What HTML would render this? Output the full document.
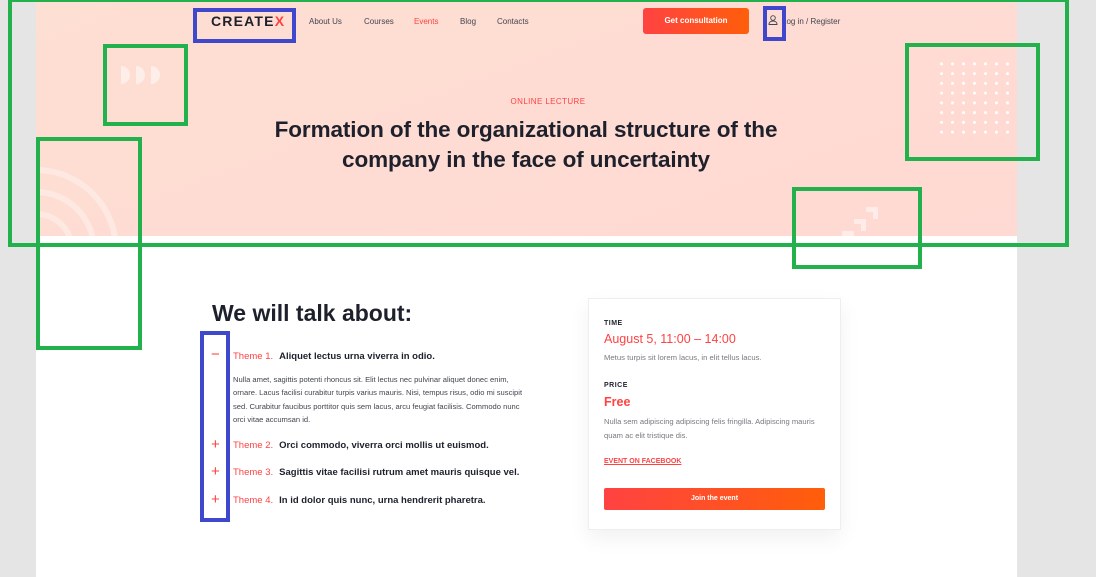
<!DOCTYPE html>
<html><head><meta charset="utf-8"><style>
*{margin:0;padding:0;box-sizing:border-box}
body{width:1096px;height:577px;background:#e5e5e5;position:relative;overflow:hidden;font-family:"Liberation Sans",sans-serif;color:#1e212c}
.page{position:absolute;left:36px;top:0;width:981px;height:577px;background:#fff}
.hero{position:absolute;left:36px;top:0;width:981px;height:236px;background:linear-gradient(160deg,#fedfd3,#ffd9d3)}
.a{position:absolute}
.g{position:absolute;border:4px solid #22b14c}
.b{position:absolute;border:4px solid #3f48cc}
.nav{font-size:8px;color:#424551;top:17px}
.dots{position:absolute;left:936px;top:59px;width:77px;height:78px;background-image:radial-gradient(circle,#fff 1.3px,transparent 1.7px);background-size:11px 9.75px}
.th{position:absolute;left:233px;font-size:9.5px;color:#ff4242}
.th b{color:#1e212c;margin-left:6px}
.pl{position:absolute;left:211px;color:#ff4242;font-size:15px;font-weight:300}
</style></head><body>
<div class="page"></div>
<div class="hero"></div>
<div class="a" style="left:211px;top:13px;font-size:14px;font-weight:bold;letter-spacing:1.2px">CREATE<span style="color:#ff4242">X</span></div>
<div class="a nav" style="left:309px">About Us</div>
<div class="a nav" style="left:364px">Courses</div>
<div class="a nav" style="left:414px;color:#ff4242">Events</div>
<div class="a nav" style="left:460px">Blog</div>
<div class="a nav" style="left:497px">Contacts</div>
<div class="a" style="left:643px;top:8px;width:106px;height:26px;background:linear-gradient(90deg,#ff4242,#ff5e0a);border-radius:3px;color:#fff;font-size:8px;font-weight:bold;text-align:center;line-height:26px">Get consultation</div>
<svg class="a" style="left:767px;top:14px" width="12" height="12" viewBox="0 0 12 12" fill="none" stroke="#424551" stroke-width="0.9"><circle cx="6" cy="4" r="2.3"/><path d="M2 10.5c0-2.3 1.8-3.5 4-3.5s4 1.2 4 3.5z"/></svg>
<div class="a nav" style="left:782px">Log in / Register</div>
<div class="a" style="left:0;width:1096px;top:97px;text-align:center;font-size:8px;color:#ff4242;letter-spacing:.4px">ONLINE LECTURE</div>
<div class="a" style="left:0;width:1052px;top:115px;text-align:center;font-size:22.5px;font-weight:bold;line-height:30px;letter-spacing:-.1px">Formation of the organizational structure of the<br>company in the face of uncertainty</div>
<svg class="a" style="left:121px;top:65px" width="40" height="20" fill="#fff" opacity=".5"><path d="M0 1a9 9 0 0 1 0 18z M15 1a9 9 0 0 1 0 18z M30 1a9 9 0 0 1 0 18z"/></svg>
<svg class="a" style="left:36px;top:160px" width="90" height="76" fill="none" stroke="#fff" opacity=".35" stroke-width="6"><circle cx="0" cy="90" r="80"/><circle cx="0" cy="90" r="58"/><circle cx="0" cy="90" r="36"/></svg>
<div class="dots"></div>
<svg class="a" style="left:822px;top:206px" width="60" height="30" fill="#fff" opacity=".5"><path d="M44 1h12v12h-5v-7h-7z M32 13h12v12h-5v-7h-7z M20 25h12v5h-12z"/></svg>
<div class="a" style="left:212px;top:300px;font-size:23px;font-weight:bold">We will talk about:</div>
<div class="pl" style="top:346px">−</div>
<div class="th" style="top:351px">Theme 1.<b>Aliquet lectus urna viverra in odio.</b></div>
<div class="a" style="left:233px;top:373px;width:296px;font-size:7.6px;line-height:13.3px;color:#424551">Nulla amet, sagittis potenti rhoncus sit. Elit lectus nec pulvinar aliquet donec enim, ornare. Lacus facilisi curabitur turpis varius mauris. Nisi, tempus risus, odio mi suscipit sed. Curabitur faucibus porttitor quis sem lacus, arcu feugiat facilisis. Commodo nunc orci vitae accumsan id.</div>
<div class="pl" style="top:436px">+</div>
<div class="th" style="top:440px">Theme 2.<b>Orci commodo, viverra orci mollis ut euismod.</b></div>
<div class="pl" style="top:463px">+</div>
<div class="th" style="top:467px">Theme 3.<b>Sagittis vitae facilisi rutrum amet mauris quisque vel.</b></div>
<div class="pl" style="top:491px">+</div>
<div class="th" style="top:495px">Theme 4.<b>In id dolor quis nunc, urna hendrerit pharetra.</b></div>
<div class="a" style="left:588px;top:298px;width:253px;height:232px;background:#fff;border:1px solid #eee;box-shadow:0 8px 20px rgba(0,0,0,.06)"></div>
<div class="a" style="left:604px;top:320px;font-size:7px;font-weight:bold;letter-spacing:.5px">TIME</div>
<div class="a" style="left:604px;top:332px;font-size:12.5px;color:#ff4242">August 5, 11:00 – 14:00</div>
<div class="a" style="left:604px;top:353px;font-size:7.7px;color:#787a80">Metus turpis sit lorem lacus, in elit tellus lacus.</div>
<div class="a" style="left:604px;top:382px;font-size:7px;font-weight:bold;letter-spacing:.5px">PRICE</div>
<div class="a" style="left:604px;top:395px;font-size:12.5px;font-weight:bold;color:#ff4242">Free</div>
<div class="a" style="left:604px;top:415px;width:218px;font-size:7.6px;line-height:13.5px;color:#787a80">Nulla sem adipiscing adipiscing felis fringilla. Adipiscing mauris quam ac elit tristique dis.</div>
<div class="a" style="left:604px;top:458px;font-size:7px;font-weight:bold;color:#ff4242;text-decoration:underline">EVENT ON FACEBOOK</div>
<div class="a" style="left:604px;top:488px;width:221px;height:22px;background:linear-gradient(90deg,#ff4242,#ff5e0a);border-radius:2px;color:#fff;font-size:7px;font-weight:bold;text-align:center;line-height:22px">Join the event</div>
<div class="g" style="left:8px;top:-2px;width:1061px;height:249px"></div>
<div class="g" style="left:103px;top:44px;width:85px;height:82px"></div>
<div class="g" style="left:36px;top:137px;width:106px;height:213px"></div>
<div class="g" style="left:905px;top:43px;width:135px;height:118px"></div>
<div class="g" style="left:792px;top:187px;width:130px;height:82px"></div>
<div class="b" style="left:193px;top:8px;width:103px;height:35px"></div>
<div class="b" style="left:763px;top:6px;width:23px;height:35px"></div>
<div class="b" style="left:200px;top:331px;width:30px;height:191px"></div>
</body></html>
